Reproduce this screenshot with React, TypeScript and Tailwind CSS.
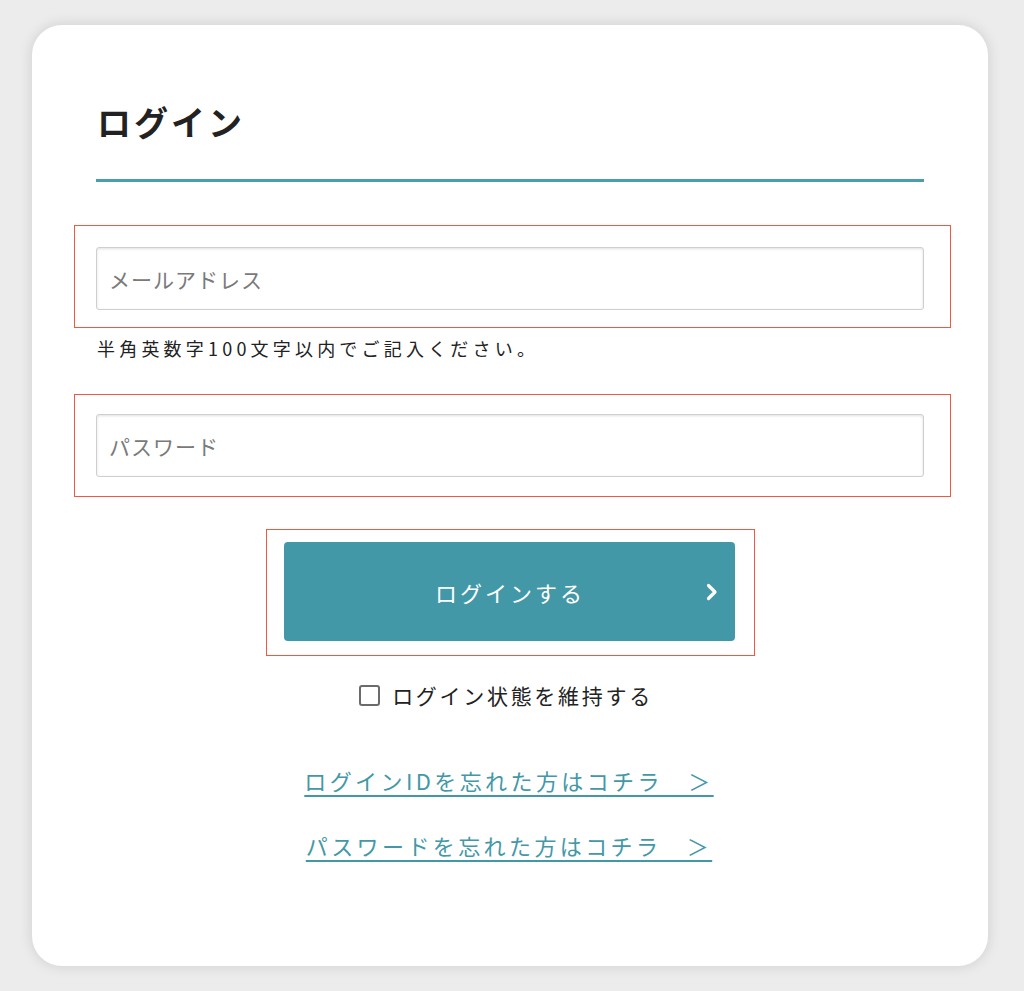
import { useState } from "react"

const jp = { fontFamily: '"Noto Sans CJK JP", "Noto Sans", sans-serif' }

export default function App() {
  const [keep, setKeep] = useState(false)

  return (
    <div className="min-h-[991px] bg-[#ececec] pt-[25px] pb-[25px]" style={jp}>
      <div className="ml-[32px] w-[956px] h-[941px] bg-white rounded-[30px] shadow-[0_0_14px_rgba(0,0,0,0.13)] pt-[72px] px-[64px]">
        {/* Title */}
        <h1 className="text-[34px] leading-[50px] font-bold text-[#222] pl-[1px] tracking-[3px]">ログイン</h1>
        <div className="mt-[32px] h-[3px] bg-[#4a9ea9]" />

        {/* Email */}
        <div className="mt-[43px] -ml-[22px] -mr-[27px] border border-[#ec5a44] pl-[21px] pr-[26px] pt-[21px] pb-[17px]">
          <input
            type="text"
            placeholder="メールアドレス"
            className="block w-full h-[63px] rounded-[3px] border border-[#cfcfcf] bg-white px-[12px] text-[21px] tracking-[1px] text-[#333] placeholder:text-[#7a7a7a] shadow-[inset_0_1px_3px_rgba(0,0,0,0.12)] outline-none"
          />
        </div>
        <p className="mt-[7px] text-[18px] leading-[27px] tracking-[4.2px] text-[#222] pl-[1px]">
          半角英数字100文字以内でご記入ください。
        </p>

        {/* Password */}
        <div className="mt-[32px] -ml-[22px] -mr-[27px] border border-[#ec5a44] pl-[21px] pr-[26px] pt-[19px] pb-[19px]">
          <input
            type="password"
            placeholder="パスワード"
            className="block w-full h-[63px] rounded-[3px] border border-[#cfcfcf] bg-white px-[12px] text-[21px] tracking-[1px] text-[#333] placeholder:text-[#7a7a7a] shadow-[inset_0_1px_3px_rgba(0,0,0,0.12)] outline-none"
          />
        </div>

        {/* Submit */}
        <div className="mt-[32px] flex justify-center">
          <div className="border border-[#ec5a44] pt-[12px] pb-[14px] pl-[17px] pr-[19px]">
            <button className="relative w-[451px] h-[99px] rounded-[4px] bg-[#4398a8] text-white text-[22px] tracking-[3px] leading-none flex items-center justify-center">
              <span className="ml-[2px]">ログインする</span>
              <svg className="absolute right-[16px] top-[41px]" width="14" height="18" viewBox="0 0 14 18" fill="none">
                <path d="M3.5 2.5 L10 9 L3.5 15.5" stroke="white" strokeWidth="3.2" strokeLinecap="round" strokeLinejoin="round" />
              </svg>
            </button>
          </div>
        </div>

        {/* Keep login */}
        <label className="mt-[24px] flex items-center justify-center gap-[12px] cursor-pointer ml-[-8px]">
          <span
            onClick={() => setKeep(!keep)}
            className="w-[21px] h-[21px] rounded-[3px] border-[2.5px] border-[#6b6b6b] bg-white flex items-center justify-center"
          >
            {keep && <span className="w-[11px] h-[11px] bg-[#4398a8]" />}
          </span>
          <span className="text-[21px] leading-[30px] tracking-[2.7px] text-[#222]">ログイン状態を維持する</span>
        </label>

        {/* Links */}
        <div className="mt-[53px] flex flex-col items-center gap-[30px] ml-[-2px]">
          <a href="#" className="text-[22px] leading-[35px] tracking-[3.4px] text-[#4398a8] underline underline-offset-[5px] decoration-[2px]">
            ログインIDを忘れた方はコチラ　＞
          </a>
          <a href="#" className="text-[22px] leading-[35px] tracking-[3.4px] text-[#4398a8] underline underline-offset-[5px] decoration-[2px]">
            パスワードを忘れた方はコチラ　＞
          </a>
        </div>
      </div>
    </div>
  )
}
